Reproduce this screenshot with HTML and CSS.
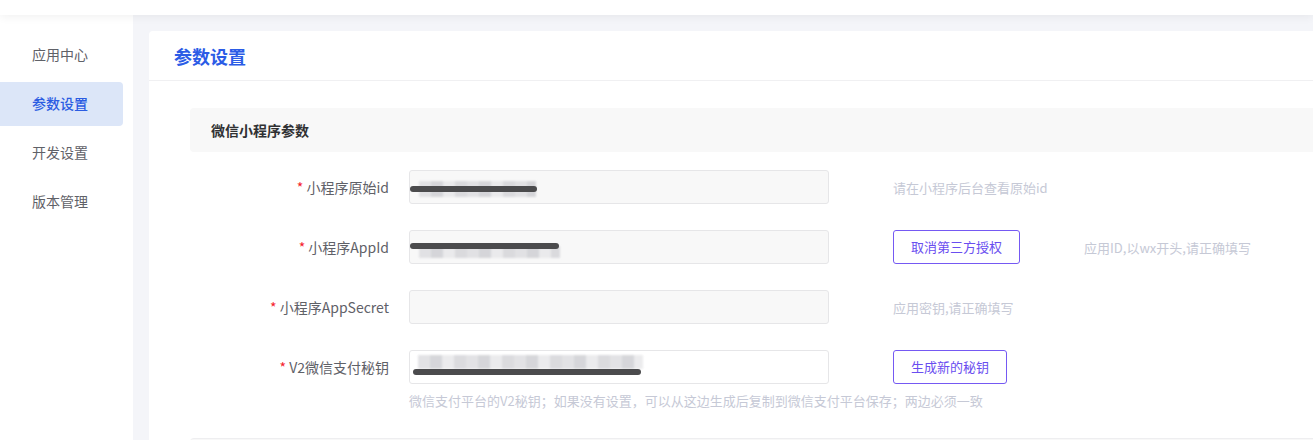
FILE: index.html
```html
<html><head>
<title>参数设置</title>
<link rel="stylesheet" href="styles.css">
</head><body>

<div class="top"></div>

<div class="layout">
<div class="side">
<div class="nav">应用中心</div>
<div class="nav active">参数设置</div>
<div class="nav">开发设置</div>
<div class="nav">版本管理</div>
</div>

<div class="main">
<div class="card">
<div class="card-head">参数设置</div>
<div class="card-body">
<div class="section">微信小程序参数</div>

<div class="form">
<div class="row">
<div class="label"><span class="req">*</span> 小程序原始id</div>
<div class="field disabled"><div class="mask m1"><i class="blur"></i><i class="bar"></i></div></div>
<div class="tip">请在小程序后台查看原始id</div>
</div>

<div class="row">
<div class="label"><span class="req">*</span> 小程序AppId</div>
<div class="field disabled"><div class="mask m2"><i class="blur"></i><i class="bar"></i></div></div>
<div class="btn">取消第三方授权</div>
<div class="tip">应用ID,以wx开头,请正确填写</div>
</div>

<div class="row">
<div class="label"><span class="req">*</span> 小程序AppSecret</div>
<div class="field disabled"></div>
<div class="tip">应用密钥,请正确填写</div>
</div>

<div class="row last">
<div class="label"><span class="req">*</span> V2微信支付秘钥</div>
<div class="field"><div class="mask m4"><i class="blur"></i><i class="bar"></i></div></div>
<div class="btn">生成新的秘钥</div>
</div>
<div class="help">微信支付平台的V2秘钥；如果没有设置，可以从这边生成后复制到微信支付平台保存；两边必须一致</div>
</div>

<div class="section next"></div>
</div>
</div>
</div>
</div>

</body></html>
```

FILE: styles.css
```css
body{margin:0;background:#f4f5f9;font-family:"Noto Sans CJK SC","Liberation Sans",sans-serif;font-size:14px;color:#606266;overflow:hidden;}

.top{position:relative;z-index:2;height:15px;background:#fff;box-shadow:0 2px 10px rgba(0,0,0,.06);}

.layout{display:flex;height:425px;}

.side{width:133px;flex:none;background:#fff;padding-top:18px;box-sizing:border-box;}
.nav{height:44px;line-height:43px;margin-bottom:5px;padding-left:32px;width:123px;box-sizing:border-box;border-radius:0 4px 4px 0;color:#5f6168;}
.nav.active{background:#dce6f8;color:#2b5ce2;font-weight:500;}

.main{flex:1;padding:16px 0 0 16px;}
.card{width:1260px;height:100%;background:#fff;border-radius:4px 4px 0 0;}
.card-head{height:49px;line-height:50px;padding-left:25px;border-bottom:1px solid #f0f0f2;font-size:18px;font-weight:bold;color:#2b5ce6;}
.card-body{padding:27px 41px 0;}

.section{height:44px;line-height:44px;padding-left:21px;background:#f8f8f8;border-radius:4px;font-weight:bold;color:#303133;}
.section.next{margin-top:28px;border-top:1px solid #eeeef0;}

.form{padding-top:18px;}
.row{display:flex;align-items:center;height:34px;margin-bottom:26px;}
.row.last{margin-bottom:0;}
.label{width:199px;margin-right:20px;text-align:right;color:#5f6168;white-space:nowrap;}
.req{color:#f5222d;}

.field{width:420px;height:34px;box-sizing:border-box;border:1px solid #e6e6e8;border-radius:3px;background:#fff;margin-right:64px;position:relative;}
.field.disabled{background:#f8f8f8;}

.mask{position:absolute;left:0;top:0;}
.mask i{position:absolute;display:block;}
.bar{height:6px;background:#4b4b4d;border-radius:3px;}
.blur{background:repeating-linear-gradient(90deg,#dedee1 0 12px,#cfd0d4 12px 24px,#e8e8ea 24px 36px,#d5d5d9 36px 48px);opacity:.85;filter:blur(1px);}
.m1 .bar{left:0;top:15px;width:127px;}
.m1 .blur{left:9px;top:10px;width:117px;height:16px;}
.m2 .bar{left:0;top:12px;width:149px;}
.m2 .blur{left:9px;top:15px;width:141px;height:12px;}
.m4 .bar{left:3px;top:18px;width:228px;}
.m4 .blur{left:8px;top:4px;width:225px;height:14px;}

.btn{height:34px;line-height:32px;box-sizing:border-box;padding:0 17px;border:1px solid #7559f3;border-radius:3px;font-size:13px;color:#6a4ef0;margin-right:64px;white-space:nowrap;}
.tip{font-size:13px;color:#c6c9d6;white-space:nowrap;}
.help{margin-left:219px;padding-top:8px;line-height:18px;font-size:13px;color:#c6c9d6;white-space:nowrap;}
```
